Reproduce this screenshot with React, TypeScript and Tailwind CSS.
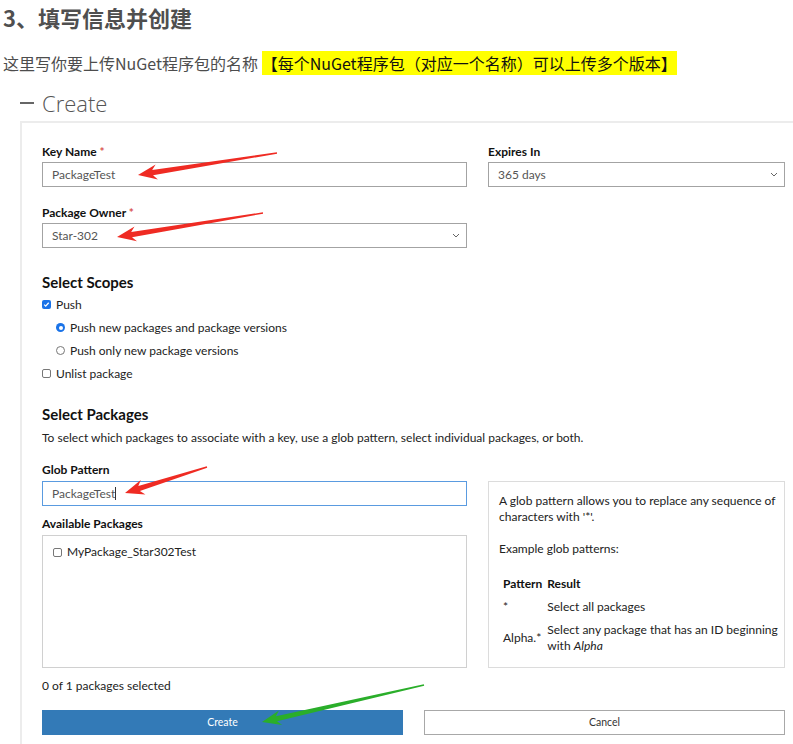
import type { ReactNode } from 'react'

type Pt = [number, number]

// annotation arrow shape: thin tail widening toward a notched head
function arrowPoints(tail: Pt, tip: Pt, head = 19, wing = 7.5, shaft = 2.6, tailW = 0.7) {
  const dx = tip[0] - tail[0]
  const dy = tip[1] - tail[1]
  const len = Math.hypot(dx, dy)
  const ux = dx / len
  const uy = dy / len
  const nx = -uy
  const ny = ux
  const jx = tip[0] - ux * head * 0.78
  const jy = tip[1] - uy * head * 0.78
  const bx = tip[0] - ux * head
  const by = tip[1] - uy * head
  const pts: Pt[] = [
    [tail[0] + nx * tailW, tail[1] + ny * tailW],
    [jx + nx * shaft, jy + ny * shaft],
    [bx + nx * wing, by + ny * wing],
    tip,
    [bx - nx * wing, by - ny * wing],
    [jx - nx * shaft, jy - ny * shaft],
    [tail[0] - nx * tailW, tail[1] - ny * tailW],
  ]
  return pts.map((p) => `${p[0].toFixed(1)},${p[1].toFixed(1)}`).join(' ')
}

const arrows: { tail: Pt; tip: Pt; color: string }[] = [
  { tail: [277, 153], tip: [138, 175], color: '#ef2b23' },
  { tail: [263, 213], tip: [117, 237], color: '#ef2b23' },
  { tail: [207, 467], tip: [125, 493], color: '#ef2b23' },
  { tail: [424, 685], tip: [262, 722], color: '#2aae2a' },
]

function Label({ children, required }: { children: ReactNode; required?: boolean }) {
  return (
    <div className="text-[12px] leading-[16px] font-bold text-[#111]">
      {children}
      {required && <span className="text-[#d9534f]"> *</span>}
    </div>
  )
}

function Chevron() {
  return (
    <svg width="8" height="5" viewBox="0 0 8 5" className="ml-auto">
      <path d="M1 1l3 3 3-3" fill="none" stroke="#666" strokeWidth="1" />
    </svg>
  )
}

function Field({ value, select, focused }: { value: string; select?: boolean; focused?: boolean }) {
  return (
    <div
      className={
        focused
          ? 'h-[25px] border border-[#5a9be0] px-[9px] flex items-center text-[12px] text-[#555]'
          : 'h-[25px] border border-[#a3a3a3] pl-[9px] pr-[6px] flex items-center text-[12px] text-[#555]'
      }
    >
      <span>{value}</span>
      {focused && <span className="w-px h-[13px] bg-[#333]" />}
      {select && <Chevron />}
    </div>
  )
}

function Box({ checked }: { checked?: boolean }) {
  return checked ? (
    <span className="w-[9px] h-[9px] rounded-[2px] bg-[#1a73e8] flex items-center justify-center mr-[5px]">
      <svg width="7" height="7" viewBox="0 0 7 7">
        <path d="M1.2 3.6l1.5 1.5 3-3.4" fill="none" stroke="white" strokeWidth="1.3" />
      </svg>
    </span>
  ) : (
    <span className="w-[9px] h-[9px] rounded-[2px] border border-[#777] mr-[5px]" />
  )
}

function Radio({ checked }: { checked?: boolean }) {
  return checked ? (
    <span className="w-[9px] h-[9px] rounded-full bg-[#1a73e8] flex items-center justify-center mr-[5px]">
      <span className="w-[4px] h-[4px] rounded-full bg-white" />
    </span>
  ) : (
    <span className="w-[9px] h-[9px] rounded-full border border-[#777] mr-[5px]" />
  )
}

export default function App() {
  return (
    <div className="relative w-[793px] h-[744px] overflow-hidden bg-white font-['Lato',sans-serif] text-[#222]">
      <h2 className="pl-[3px] pt-[4px] text-[22px] leading-[26px] font-bold text-[#4f4f4f] font-['Noto_Sans_CJK_SC',sans-serif]">
        3、填写信息并创建
      </h2>
      <p className="mt-[24px] pl-[3px] text-[16px] leading-[18px] text-[#4d4d4d] font-['Noto_Sans_CJK_SC',sans-serif]">
        这里写你要上传NuGet程序包的名称{' '}
        <span className="bg-[#ffff00] text-[#111]">【每个NuGet程序包（对应一个名称）可以上传多个版本】</span>
      </p>
      <div className="mt-[17px] ml-[20px] flex items-center text-[22px] leading-[28px] font-light text-[#555] font-['Open_Sans',sans-serif]">
        <span className="w-[14px] h-[1.5px] bg-[#666] mr-[8px]" />
        Create
      </div>

      {/* form panel */}
      <div className="mt-[4px] ml-[20px] border-t-2 border-l-2 border-[#ececec] pl-[20px] pr-[8px] pt-[21px] pb-[9px]">
        <div className="grid grid-cols-[425px_297px] gap-x-[21px]">
          <div>
            <Label required>Key Name</Label>
            <div className="mt-[2px]">
              <Field value="PackageTest" />
            </div>
          </div>
          <div>
            <Label>Expires In</Label>
            <div className="mt-[2px]">
              <Field value="365 days" select />
            </div>
          </div>
        </div>

        <div className="mt-[18px] w-[425px]">
          <Label required>Package Owner</Label>
          <div className="mt-[2px]">
            <Field value="Star-302" select />
          </div>
        </div>

        <h3 className="mt-[24px] text-[15px] leading-[20px] font-bold text-[#111]">Select Scopes</h3>
        <div className="mt-px text-[12px] text-[#222]">
          <div className="h-[23px] flex items-center">
            <Box checked />
            Push
          </div>
          <div className="h-[23px] flex items-center pl-[14px]">
            <Radio checked />
            Push new packages and package versions
          </div>
          <div className="h-[23px] flex items-center pl-[14px]">
            <Radio />
            Push only new package versions
          </div>
          <div className="h-[23px] flex items-center">
            <Box />
            Unlist package
          </div>
        </div>

        <h3 className="mt-[19px] text-[15px] leading-[20px] font-bold text-[#111]">Select Packages</h3>
        <p className="mt-[6px] text-[12px] leading-[16px] text-[#222]">
          To select which packages to associate with a key, use a glob pattern, select individual packages, or both.
        </p>

        <div className="mt-[16px]">
          <Label>Glob Pattern</Label>
        </div>
        <div className="mt-[3px] grid grid-cols-[425px_297px] gap-x-[21px]">
          <div>
            <Field value="PackageTest" focused />
            <div className="mt-[10px]">
              <Label>Available Packages</Label>
            </div>
            <div className="mt-[3px] h-[133px] border border-[#d0d0d0] pt-[8px] pl-[10px]">
              <div className="flex items-center text-[12px] leading-[16px] text-[#222]">
                <Box />
                MyPackage_Star302Test
              </div>
            </div>
          </div>
          <div className="border border-[#dcdcdc] pt-[11px] pl-[10px] pr-[2px] text-[12px] leading-[16px] text-[#222]">
            <p>A glob pattern allows you to replace any sequence of characters with '*'.</p>
            <p className="mt-[16px]">Example glob patterns:</p>
            <table className="mt-[19px] ml-[4px] border-collapse">
              <thead>
                <tr className="text-left text-[#111]">
                  <th className="pr-[5px] pb-[7px] font-bold">Pattern</th>
                  <th className="pb-[7px] font-bold">Result</th>
                </tr>
              </thead>
              <tbody>
                <tr>
                  <td className="pb-[7px] align-top">*</td>
                  <td className="pb-[7px]">Select all packages</td>
                </tr>
                <tr>
                  <td className="align-middle">Alpha.*</td>
                  <td>
                    Select any package that has an ID beginning with <i>Alpha</i>
                  </td>
                </tr>
              </tbody>
            </table>
          </div>
        </div>

        <p className="mt-[10px] text-[12px] leading-[16px] text-[#222]">0 of 1 packages selected</p>

        <div className="mt-[16px] grid grid-cols-2 gap-x-[21px]">
          <button className="h-[25px] bg-[#337ab7] text-white text-[10.5px]">Create</button>
          <button className="h-[25px] border border-[#a8a8a8] bg-white text-[#333] text-[10.5px]">Cancel</button>
        </div>
      </div>

      {/* screenshot annotations */}
      <svg className="absolute inset-0 pointer-events-none" width="793" height="744">
        {arrows.map((a, i) => (
          <polygon key={i} points={arrowPoints(a.tail, a.tip)} fill={a.color} />
        ))}
      </svg>
    </div>
  )
}
